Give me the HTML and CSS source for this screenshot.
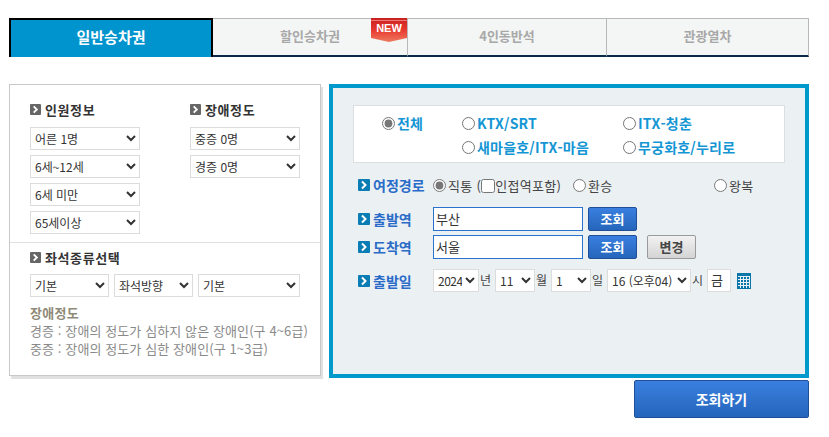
FILE: index.html
```html
<!DOCTYPE html>
<html lang="ko">
<head>
<meta charset="utf-8">
<title>승차권 조회</title>
<link rel="stylesheet" href="styles.css">
</head>
<body>
<svg class="defs" width="0" height="0" aria-hidden="true">
  <defs>
    <symbol id="chev" viewBox="0 0 12 12"><path d="M4 2.500 7.500 6 4 9.500" fill="none" stroke="#fff" stroke-width="2"/></symbol>
  </defs>
</svg>
<div class="page">
  <nav class="tabs">
    <a class="tab active">일반승차권</a>
    <a class="tab">할인승차권
      <svg class="new" width="36" height="24" viewBox="0 0 36 24" aria-hidden="true">
        <defs><linearGradient id="red" x1="0" y1="0" x2="0" y2="1"><stop offset="0" stop-color="#c91f1f"/><stop offset=".5" stop-color="#e8392f"/><stop offset="1" stop-color="#ee7a60"/></linearGradient></defs>
        <path d="M0 0H36V20L18 24 0 20Z" fill="url(#red)"/>
        <rect y="2" width="36" height="1" fill="#ef7b74"/>
        <text x="18" y="14" text-anchor="middle" class="new-text">NEW</text>
      </svg>
    </a>
    <a class="tab">4인동반석</a>
    <a class="tab">관광열차</a>
  </nav>

  <main class="main">
    <section class="left">
      <div class="people">
        <div class="col">
          <h3 class="head"><svg class="ico gray"><use href="#chev"/></svg>인원정보</h3>
          <select class="sel w110"><option>어른 1명</option></select>
          <select class="sel w110"><option>6세~12세</option></select>
          <select class="sel w110"><option>6세 미만</option></select>
          <select class="sel w110"><option>65세이상</option></select>
        </div>
        <div class="col">
          <h3 class="head"><svg class="ico gray"><use href="#chev"/></svg>장애정도</h3>
          <select class="sel w110"><option>중증 0명</option></select>
          <select class="sel w110"><option>경증 0명</option></select>
        </div>
      </div>
      <div class="seats">
        <h3 class="head"><svg class="ico gray"><use href="#chev"/></svg>좌석종류선택</h3>
        <div class="seat-row">
          <select class="sel w79"><option>기본</option></select>
          <select class="sel w79"><option>좌석방향</option></select>
          <select class="sel w102"><option>기본</option></select>
        </div>
        <h4 class="note-title">장애정도</h4>
        <p class="note">경증 : 장애의 정도가 심하지 않은 장애인(구 4~6급)</p>
        <p class="note">중증 : 장애의 정도가 심한 장애인(구 1~3급)</p>
      </div>
    </section>

    <section class="right">
      <div class="kinds">
        <label class="kind"><input type="radio" name="kind" checked>전체</label>
        <label class="kind"><input type="radio" name="kind">KTX/SRT</label>
        <label class="kind"><input type="radio" name="kind">ITX-청춘</label>
        <span></span>
        <label class="kind"><input type="radio" name="kind">새마을호/ITX-마음</label>
        <label class="kind"><input type="radio" name="kind">무궁화호/누리로</label>
      </div>

      <div class="route">
        <span class="lab"><svg class="ico blue"><use href="#chev"/></svg>여정경로</span>
        <label class="opt r1"><input type="radio" name="route" checked>직통 (<input type="checkbox" class="chk">인접역포함)</label>
        <label class="opt r2"><input type="radio" name="route">환승</label>
        <label class="opt"><input type="radio" name="route">왕복</label>
      </div>

      <div class="station first">
        <span class="lab"><svg class="ico blue"><use href="#chev"/></svg>출발역</span>
        <input class="txt" type="text" value="부산">
        <button class="btn blue-btn">조회</button>
      </div>
      <div class="station">
        <span class="lab"><svg class="ico blue"><use href="#chev"/></svg>도착역</span>
        <input class="txt" type="text" value="서울">
        <button class="btn blue-btn">조회</button>
        <button class="btn gray-btn">변경</button>
      </div>
      <div class="date">
        <span class="lab"><svg class="ico blue"><use href="#chev"/></svg>출발일</span>
        <select class="sel d46"><option>2024</option></select><span class="unit">년</span>
        <select class="sel d40"><option>11</option></select><span class="unit">월</span>
        <select class="sel d40"><option>1</option></select><span class="unit">일</span>
        <select class="sel d84"><option>16 (오후04)</option></select><span class="unit">시</span>
        <input class="day" type="text" value="금">
        <svg class="cal" width="14" height="16" viewBox="0 0 14 16" aria-hidden="true">
          <rect width="14" height="16" fill="#0a76a8"/>
          <path d="M1 3.500H13M1 6.500H13M1 9.500H13M1 12.500H13M3.500 3V15M6.500 3V15M9.500 3V15M12.500 3V15" stroke="#e8f2f6" stroke-width="1"/>
        </svg>
      </div>
    </section>
  </main>

  <div class="actions"><button class="btn blue-btn submit">조회하기</button></div>
</div>
</body>
</html>
```

FILE: styles.css
```css
* { box-sizing: border-box; }
html, body { margin: 0; padding: 0; background: #fff; }
body { font-family: "Noto Sans CJK KR", "Liberation Sans", sans-serif; font-size: 13px; color: #333; }
.defs { position: absolute; }
.page { width: 800px; margin-left: 9px; padding-top: 18px; }

.tabs { display: grid; grid-template-columns: 204px 195px 199px 202px; height: 39px; margin-bottom: 27px; }
.tab { position: relative; display: flex; align-items: center; justify-content: center; background: #f4f6f5; border-top: 1px solid #b8b8b8; border-right: 1px solid #b8b8b8; border-bottom: 2px solid #0b2a4a; font-weight: 700; font-size: 13px; color: #a8a8a8; padding-bottom: 3px; }
.tab.active { background: #0094ce; border: 2px solid #000; border-bottom: 0; color: #fff; font-size: 15px; padding-bottom: 5px; }
.new { position: absolute; top: -1px; right: 0; }
.new-text { font-family: "Liberation Sans", sans-serif; font-size: 11px; font-weight: 700; fill: #fff; }

.main { display: flex; gap: 8px; align-items: flex-start; }
.left { width: 312px; height: 292px; border: 1px solid #c8c8c8; box-shadow: 2px 3px 0 #e0e0e0; background: #fff; }
.people { display: grid; grid-template-columns: 160px 110px; padding: 15px 20px 8px; border-bottom: 1px solid #e0e0e0; height: 158px; }
.col { display: flex; flex-direction: column; gap: 5px; }
.head { display: flex; align-items: center; gap: 4px; margin: 0 0 4px; height: 18px; font-size: 13px; letter-spacing: .6px; font-weight: 700; color: #333; white-space: nowrap; }
.ico { width: 11px; height: 11px; border-radius: 1px; flex: none; }
.ico.gray { background: #666; }
.ico.blue { width: 12px; height: 12px; background: #0a7db5; }
.sel { height: 23px; border: 1px solid #dcdcdc; background-color: #fff; font-family: inherit; font-size: 12px; color: #333; padding: 0; border-radius: 0; }
.w110 { width: 110px; }
.w79 { width: 79px; }
.w102 { width: 102px; }
.seats { padding: 5px 20px 0; }
.seats .head { margin-bottom: 8px; }
.seat-row { display: flex; gap: 5px; margin-bottom: 6px; }
.note-title { margin: 0; font-size: 13px; font-weight: 700; color: #8f8a78; line-height: 19px; letter-spacing: .3px; }
.note { margin: 0; font-size: 13px; letter-spacing: .1px; color: #8a8a8a; line-height: 18px; white-space: nowrap; }

.right { width: 480px; height: 294px; border: 4px solid #0099cc; background: #ebf0f3; padding: 17px 20px 0 20px; }
.kinds { display: grid; grid-template-columns: 80px 161px 1fr; grid-auto-rows: 24px; width: 432px; height: 58px; padding: 5px 0 0 28px; background: #fff; border: 1px solid #dcdfe0; }
.kind { display: flex; align-items: center; font-weight: 700; font-size: 14px; letter-spacing: .2px; color: #1496d4; white-space: nowrap; }
input[type=radio] { width: 13px; height: 13px; margin: 0 2px 0 0; accent-color: #777; flex: none; }
.route, .station, .date { display: flex; align-items: center; }
.route { margin-top: 12px; height: 20px; margin-left: 5px; }
.lab { display: flex; align-items: center; gap: 3px; width: 75px; font-weight: 700; font-size: 14px; color: #2a6cc8; flex: none; white-space: nowrap; }
.opt { display: flex; align-items: center; color: #444; white-space: nowrap; letter-spacing: .3px; }
.r1 { width: 140px; }
.r2 { width: 141px; }
.chk { width: 14px; height: 14px; margin: 2px 0 0 0; }
.station { height: 24px; margin-left: 5px; margin-top: 4px; }
.station.first { margin-top: 12px; }
.txt { width: 150px; height: 24px; border: 1px solid #2a72d0; font-family: inherit; font-size: 13px; color: #333; padding: 0 2px 2px; margin-right: 5px; border-radius: 0; }
.btn { font-family: inherit; font-weight: 700; border-radius: 2px; cursor: pointer; padding: 0; }
.station .btn { width: 49px; height: 24px; font-size: 13px; padding-bottom: 2px; }
.blue-btn { color: #fff; background: linear-gradient(#3a7fe0, #2566bb); border: 1px solid #1f4f96; }
.gray-btn { color: #444; background: linear-gradient(#f2f2f2, #d4d4d4); border: 1px solid #9a9a9a; margin-left: 10px; }
.date { margin-left: 5px; margin-top: 10px; height: 23px; }
.d46 { width: 46px; letter-spacing: -.5px; }
.d40 { width: 40px; }
.d84 { width: 84px; }
.unit { width: 16px; padding: 0 0 3px 1px; font-size: 12px; color: #444; flex: none; }
.day { width: 24px; height: 23px; border: 1px solid #dcdcdc; padding: 0 0 2px 3px; font-family: inherit; font-size: 13px; color: #333; margin-right: 6px; border-radius: 0; }
.cal { flex: none; }

.actions { display: flex; justify-content: flex-end; margin-top: 2px; }
.submit { width: 175px; height: 38px; font-size: 14px; }
```
